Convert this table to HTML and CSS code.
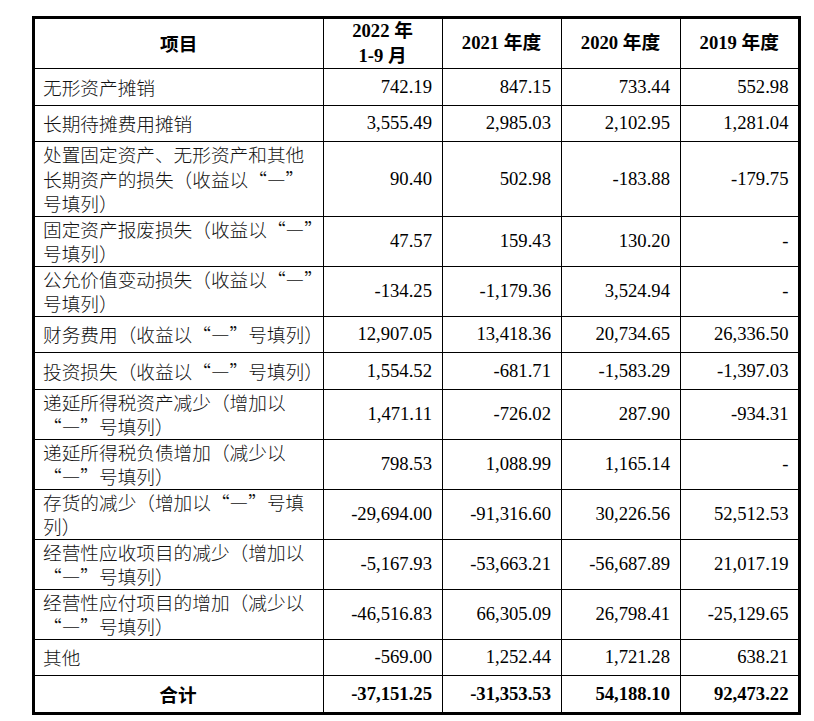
FILE: index.html
```html
<!DOCTYPE html>
<html lang="zh-CN">
<head>
<meta charset="utf-8">
<title>现金流量表补充资料</title>
<link rel="stylesheet" href="styles.css">
</head>
<body>
<div class="page">
  <div class="frame">
    <table class="fin">
      <colgroup>
        <col class="c-item">
        <col class="c-num">
        <col class="c-num">
        <col class="c-num">
        <col class="c-last">
      </colgroup>
      <thead>
        <tr class="r-head">
          <th class="th-item">项目</th>
          <th>2022 年<br>1-9 月</th>
          <th>2021 年度</th>
          <th>2020 年度</th>
          <th>2019 年度</th>
        </tr>
      </thead>
      <tbody>
        <tr class="r1">
          <td class="item">无形资产摊销</td>
          <td class="num">742.19</td><td class="num">847.15</td><td class="num">733.44</td><td class="num">552.98</td>
        </tr>
        <tr class="r1">
          <td class="item">长期待摊费用摊销</td>
          <td class="num">3,555.49</td><td class="num">2,985.03</td><td class="num">2,102.95</td><td class="num">1,281.04</td>
        </tr>
        <tr class="r3">
          <td class="item">处置固定资产、无形资产和其他<br>长期资产的损失（收益以“—”<br>号填列）</td>
          <td class="num">90.40</td><td class="num">502.98</td><td class="num">-183.88</td><td class="num">-179.75</td>
        </tr>
        <tr class="r2">
          <td class="item">固定资产报废损失（收益以“—”<br>号填列）</td>
          <td class="num">47.57</td><td class="num">159.43</td><td class="num">130.20</td><td class="num">-</td>
        </tr>
        <tr class="r2">
          <td class="item">公允价值变动损失（收益以“—”<br>号填列）</td>
          <td class="num">-134.25</td><td class="num">-1,179.36</td><td class="num">3,524.94</td><td class="num">-</td>
        </tr>
        <tr class="r1">
          <td class="item">财务费用（收益以“—”号填列）</td>
          <td class="num">12,907.05</td><td class="num">13,418.36</td><td class="num">20,734.65</td><td class="num">26,336.50</td>
        </tr>
        <tr class="r1">
          <td class="item">投资损失（收益以“—”号填列）</td>
          <td class="num">1,554.52</td><td class="num">-681.71</td><td class="num">-1,583.29</td><td class="num">-1,397.03</td>
        </tr>
        <tr class="r2">
          <td class="item">递延所得税资产减少（增加以<br>“—”号填列）</td>
          <td class="num">1,471.11</td><td class="num">-726.02</td><td class="num">287.90</td><td class="num">-934.31</td>
        </tr>
        <tr class="r2">
          <td class="item">递延所得税负债增加（减少以<br>“—”号填列）</td>
          <td class="num">798.53</td><td class="num">1,088.99</td><td class="num">1,165.14</td><td class="num">-</td>
        </tr>
        <tr class="r2">
          <td class="item">存货的减少（增加以“—”号填<br>列）</td>
          <td class="num">-29,694.00</td><td class="num">-91,316.60</td><td class="num">30,226.56</td><td class="num">52,512.53</td>
        </tr>
        <tr class="r2">
          <td class="item">经营性应收项目的减少（增加以<br>“—”号填列）</td>
          <td class="num">-5,167.93</td><td class="num">-53,663.21</td><td class="num">-56,687.89</td><td class="num">21,017.19</td>
        </tr>
        <tr class="r2">
          <td class="item">经营性应付项目的增加（减少以<br>“—”号填列）</td>
          <td class="num">-46,516.83</td><td class="num">66,305.09</td><td class="num">26,798.41</td><td class="num">-25,129.65</td>
        </tr>
        <tr class="r1">
          <td class="item">其他</td>
          <td class="num">-569.00</td><td class="num">1,252.44</td><td class="num">1,721.28</td><td class="num">638.21</td>
        </tr>
        <tr class="r1 total">
          <td class="item total-label">合计</td>
          <td class="num">-37,151.25</td><td class="num">-31,353.53</td><td class="num">54,188.10</td><td class="num">92,473.22</td>
        </tr>
      </tbody>
    </table>
  </div>
</div>
</body>
</html>
```
FILE: styles.css
```css
html, body {
  margin: 0;
  padding: 0;
  background: #ffffff;
}

.page {
  padding: 16px 0 0 32px;
}

.frame {
  width: 763px;
  border: 3px solid #000000;
}

.fin {
  width: 763px;
  table-layout: fixed;
  border-collapse: collapse;
  border-style: hidden;
  font-size: 18.67px;
  color: #000000;
}

.c-item { width: 288px; }
.c-num { width: 119px; }
.c-last { width: 118px; }

.fin th,
.fin td {
  border: 1px solid #000000;
  padding: 0 9.5px 0 8px;
  vertical-align: middle;
  white-space: nowrap;
  line-height: 24.5px;
}

.fin th {
  font-family: "Liberation Serif", "Noto Sans CJK SC", serif;
  font-weight: 700;
  text-align: center;
  padding: 0 4px;
}

.fin .th-item {
  font-family: "Noto Sans CJK SC", sans-serif;
}

.r-head { height: 48.5px; }
.r1 { height: 36.5px; }
.r2 { height: 50px; }
.r3 { height: 74px; }

.item {
  font-family: "Noto Sans CJK SC", sans-serif;
  font-weight: 300;
  color: #111111;
  text-align: left;
}

.num {
  font-family: "Liberation Serif", serif;
  text-align: right;
}

.total td {
  font-weight: 700;
  color: #000000;
}

.total-label {
  text-align: center;
}
```
